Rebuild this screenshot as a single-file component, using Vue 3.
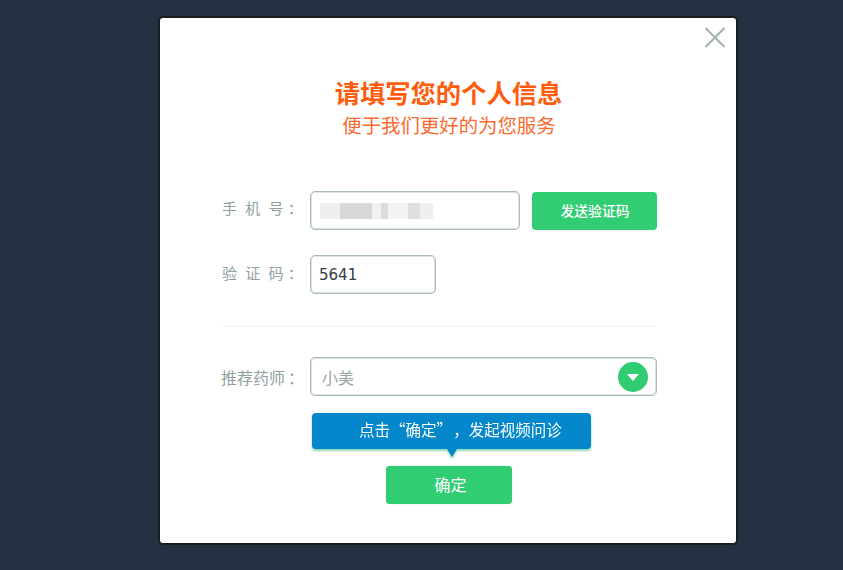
<script setup>
const blurBlocks = [
  { width: 20, color: '#efefef' },
  { width: 32, color: '#d8d8d8' },
  { width: 9, color: '#f1f1f1' },
  { width: 7, color: '#dcdcdc' },
  { width: 20, color: '#f3f3f3' },
  { width: 12, color: '#dfdfdf' },
  { width: 13, color: '#eeeeee' },
]
</script>

<template>
  <div class="page">
    <section class="modal">
      <button class="close" type="button" aria-label="关闭">
        <svg width="22" height="21" viewBox="0 0 22 21">
          <path d="M1.5 1 L20.5 20 M20.5 1 L1.5 20" fill="none" stroke="#9fb1b0" stroke-width="2" />
        </svg>
      </button>

      <h1 class="title">请填写您的个人信息</h1>
      <p class="subtitle">便于我们更好的为您服务</p>

      <div class="row first">
        <span class="label spaced lift-more"><span class="chars">手机</span>号<span class="colon tight">：</span></span>
        <div class="field phone">
          <span
            v-for="(block, i) in blurBlocks"
            :key="i"
            class="blur"
            :style="{ width: block.width + 'px', background: block.color }"
          ></span>
        </div>
        <button class="btn send" type="button">发送验证码</button>
      </div>

      <div class="row second">
        <span class="label spaced"><span class="chars">验证</span>码<span class="colon tight">：</span></span>
        <div class="field code">5641</div>
      </div>

      <div class="divider"></div>

      <div class="row third">
        <span class="label">推荐药师<span class="colon wide">：</span></span>
        <div class="field select">
          <span class="value">小美</span>
          <span class="arrow"><i></i></span>
        </div>
      </div>

      <div class="tip">点击“确定”<span class="comma">，</span>发起视频问诊</div>
      <button class="btn confirm" type="button">确定</button>
    </section>
  </div>
</template>

<style scoped>
.page {
  height: 570px;
  box-sizing: border-box;
  padding: 16px 0 0 158px;
  background: #253142;
  overflow: hidden;
  font-family: "Noto Sans CJK SC", "Noto Sans", sans-serif;
}
.modal {
  position: relative;
  width: 580px;
  height: 529px;
  box-sizing: border-box;
  border: 2px solid #1b1c1e;
  border-radius: 5px;
  background: #fff;
  display: flex;
  flex-direction: column;
}
.close {
  position: absolute;
  top: 9px;
  right: 10px;
  width: 22px;
  height: 21px;
  padding: 0;
  border: 0;
  background: none;
  display: flex;
}
.title {
  margin: 59px 0 0;
  padding-left: 1px;
  height: 30px;
  line-height: 30px;
  font-size: 25.3px;
  font-weight: 700;
  color: #ff5c0d;
  text-align: center;
}
.subtitle {
  margin: 3px 0 0;
  padding-left: 2px;
  height: 30px;
  line-height: 30px;
  font-size: 19.4px;
  color: #fb6a2e;
  text-align: center;
}
.row {
  display: flex;
  align-items: center;
  padding-left: 61px;
}
.first { margin-top: 51px; }
.second { margin-top: 25px; }
.third { margin-top: 30px; }
.label {
  width: 89px;
  flex: none;
  box-sizing: border-box;
  font-size: 16px;
  color: #8fa09f;
  white-space: nowrap;
}
.spaced {
  font-size: 15px;
  padding-left: 1px;
  margin-bottom: 4px;
}
.chars {
  letter-spacing: 8.3px;
}
.lift-more {
  margin-bottom: 6px;
}
.colon.tight {
  margin-left: 4px;
}
.colon.wide {
  margin-left: 3px;
}
.field {
  height: 39px;
  box-sizing: border-box;
  border: 1px solid #a9bcbb;
  box-shadow: inset 0 0 0 1px rgba(181, 197, 197, 0.5);
  border-radius: 5px;
  display: flex;
  align-items: center;
}
.phone {
  width: 210px;
  padding-left: 9px;
}
.blur {
  height: 16px;
  display: block;
}
.code {
  width: 126px;
  padding-left: 8px;
  font-family: "DejaVu Sans", sans-serif;
  font-size: 15px;
  color: #2f3b44;
}
.select {
  width: 347px;
  padding: 0 8px 0 11px;
  justify-content: space-between;
  font-size: 16px;
  color: #97a5a5;
}
.arrow {
  width: 30px;
  height: 30px;
  border-radius: 50%;
  background: #30cc72;
  display: flex;
  align-items: center;
  justify-content: center;
}
.arrow i {
  width: 0;
  height: 0;
  margin-top: 2px;
  border-left: 6px solid transparent;
  border-right: 6px solid transparent;
  border-top: 7px solid #fff;
}
.btn {
  border: 0;
  border-radius: 4px;
  background: #30cd73;
  color: #fff;
  font-family: inherit;
  padding: 0 0 2px;
}
.send {
  width: 125px;
  height: 38px;
  margin-left: 12px;
  padding-left: 1px;
  font-size: 13.8px;
  font-weight: 500;
}
.divider {
  height: 1px;
  margin: 32px 80px 0 63px;
  background: #eef1f1;
}
.tip {
  position: relative;
  align-self: flex-start;
  width: 279px;
  height: 36px;
  margin: 17px 0 0 152px;
  box-sizing: border-box;
  padding-left: 47px;
  border-radius: 4px;
  background: #0588cb;
  filter: drop-shadow(0 2px 1px rgba(90, 200, 150, 0.7));
  color: #fff;
  font-size: 15.5px;
  line-height: 33px;
  white-space: nowrap;
}
.comma {
  margin-left: 9px;
}
.tip::after {
  content: "";
  position: absolute;
  left: 135px;
  top: 36px;
  width: 0;
  height: 0;
  border-left: 5px solid transparent;
  border-right: 5px solid transparent;
  border-top: 8px solid #0588cb;
}
.confirm {
  align-self: flex-start;
  width: 126px;
  height: 38px;
  margin: 17px 0 0 226px;
  padding-left: 3px;
  font-size: 16px;
  box-shadow: 0 0 1px #9fb5aa;
}
</style>

<style>
html, body { background: #253142; }
</style>
